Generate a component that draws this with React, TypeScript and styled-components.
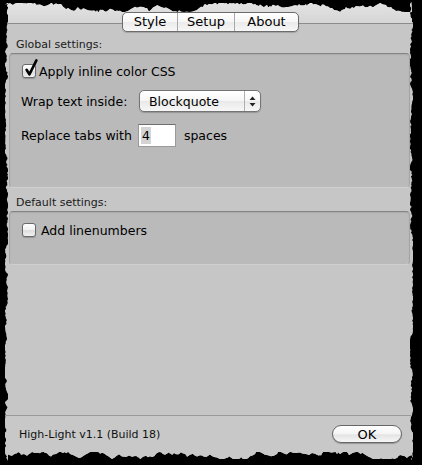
import React from 'react';
import styled, { createGlobalStyle } from 'styled-components';

const GlobalStyle = createGlobalStyle`
  html, body { margin: 0; padding: 0; background: #000; }
  * { box-sizing: border-box; }
  body {
    width: 422px; height: 465px; overflow: hidden;
    font-family: "DejaVu Sans", "Liberation Sans", sans-serif;
    color: #111;
  }
`;

const WIN_W = 408;
const WIN_H = 459;

function makeTorn(w: number, h: number): string {
  let s = 987654;
  const r = () => {
    s = (s * 1103515245 + 12345) & 0x7fffffff;
    return s / 0x7fffffff;
  };
  const walk = (d: number, min: number, max: number, amp: number) => {
    const n = d + (r() - 0.5) * amp;
    return Math.max(min, Math.min(max, n));
  };
  const pts: string[] = [];
  let d = 4;
  for (let x = 0; x < w; x += 1 + Math.floor(r() * 3)) {
    d = walk(d, 1, 10, 4);
    pts.push(`${x}px ${d.toFixed(1)}px`);
  }
  d = 1.5;
  for (let y = 0; y < h; y += 1 + Math.floor(r() * 2)) {
    d = walk(d, 0, 3, 2.5);
    pts.push(`${(w - d).toFixed(1)}px ${y}px`);
  }
  d = 5;
  for (let x = w; x > 0; x -= 1 + Math.floor(r() * 3)) {
    d = walk(d, 2, 9, 4);
    pts.push(`${x}px ${(h - d).toFixed(1)}px`);
  }
  d = 2;
  for (let y = h; y > 0; y -= 1 + Math.floor(r() * 2)) {
    d = walk(d, 0, 3, 2.5);
    pts.push(`${d.toFixed(1)}px ${y}px`);
  }
  return `polygon(${pts.join(',')})`;
}

const TORN = makeTorn(WIN_W, WIN_H);

const Window = styled.div`
  margin: 2px 0 0 5px;
  width: ${WIN_W}px;
  height: ${WIN_H}px;
  display: flex;
  flex-direction: column;
  background: #c6c6c6;
  clip-path: ${TORN};
`;

const Header = styled.div`
  height: 22px;
  flex: none;
  display: flex;
  justify-content: center;
  padding: 10px 0 0 3px;
  background: linear-gradient(#e4e4e4, #d5d5d5);
  border-bottom: 1px solid #8c8c8c;
`;

const Segmented = styled.div`
  position: relative;
  z-index: 2;
  display: flex;
  height: 20px;
  align-self: flex-start;
  border: 1px solid #6c6c6c;
  border-radius: 5px;
  overflow: hidden;
  background: linear-gradient(#ffffff 0%, #f6f6f6 50%, #ebebeb 52%, #f7f7f7 100%);
  box-shadow: 0 1px 1px rgba(0, 0, 0, 0.18);
`;

const Segment = styled.div<{ $w: number; $first?: boolean }>`
  width: ${(p) => p.$w}px;
  display: flex;
  align-items: center;
  justify-content: center;
  font-size: 13px;
  line-height: 18px;
  color: #000;
  border-left: ${(p) => (p.$first ? 'none' : '1px solid #a9a9a9')};
`;

const Main = styled.div`
  flex: 1;
  display: flex;
  flex-direction: column;
  padding: 0 3px 0 4px;
`;

const SectionLabel = styled.div<{ $h: number }>`
  height: ${(p) => p.$h}px;
  display: flex;
  align-items: flex-end;
  padding: 0 0 2px 7px;
  font-size: 11px;
  line-height: 13px;
  color: #1a1a1a;
`;

const Group = styled.div<{ $h: number }>`
  height: ${(p) => p.$h}px;
  display: flex;
  flex-direction: column;
  padding: 9px 0 0 12px;
  background: #bababa;
  border: 1px solid #a4a4a4;
  border-top-color: #858585;
  border-bottom-color: #d0d0d0;
  border-radius: 4px;
  box-shadow: inset 0 1px 1px rgba(0, 0, 0, 0.08);
`;

const Row = styled.div<{ $h: number; $mt?: number }>`
  height: ${(p) => p.$h}px;
  margin-top: ${(p) => p.$mt ?? 0}px;
  display: flex;
  align-items: center;
  font-size: 12.5px;
  color: #000;
`;

const Text = styled.span<{ $w?: number; $ml?: number }>`
  display: inline-block;
  white-space: nowrap;
  ${(p) => (p.$w ? `width: ${p.$w}px;` : '')}
  margin-left: ${(p) => p.$ml ?? 0}px;
`;

const CheckBox = styled.span`
  position: relative;
  flex: none;
  width: 14px;
  height: 14px;
  margin-right: 3px;
  border: 1px solid #6a6a6a;
  border-radius: 3px;
  background: linear-gradient(#ffffff, #f0f0f0 50%, #dddddd 55%, #f2f2f2);
  box-shadow: 0 1px 1px rgba(0, 0, 0, 0.2);
`;

const CheckMark = styled.svg`
  position: absolute;
  left: 1px;
  top: -6px;
  width: 14px;
  height: 18px;
  overflow: visible;
`;

const Popup = styled.div`
  display: flex;
  width: 122px;
  height: 22px;
  border: 1px solid #747474;
  border-radius: 5px;
  overflow: hidden;
  background: linear-gradient(#ffffff 0%, #f6f6f6 50%, #e9e9e9 52%, #f7f7f7 100%);
  box-shadow: 0 1px 1px rgba(0, 0, 0, 0.2);
`;

const PopupLabel = styled.div`
  flex: 1;
  display: flex;
  align-items: center;
  padding-left: 9px;
  font-size: 12.5px;
  color: #000;
`;

const PopupArrows = styled.div`
  width: 16px;
  display: flex;
  align-items: center;
  justify-content: center;
  border-left: 1px solid #b0b0b0;
`;

const TextField = styled.div`
  width: 38px;
  height: 23px;
  margin: 0 8px 0 6px;
  display: flex;
  align-items: center;
  padding-left: 2px;
  background: #fff;
  border: 1px solid #9a9a9a;
  border-top-color: #6e6e6e;
`;

const Selection = styled.span`
  background: #d4d4d4;
  padding: 1px 1px;
  font-size: 12.5px;
  line-height: 15px;
  color: #000;
`;

const Spacer = styled.div`
  flex: 1;
`;

const Footer = styled.div`
  height: 46px;
  flex: none;
  display: flex;
  align-items: flex-start;
  justify-content: space-between;
  padding: 9px 11px 0 14px;
  border-top: 1px solid #9a9a9a;
  background: #c8c8c8;
`;

const FooterText = styled.div`
  height: 18px;
  display: flex;
  align-items: center;
  font-size: 11px;
  color: #111;
`;

const OkButton = styled.div`
  width: 70px;
  height: 18px;
  display: flex;
  align-items: center;
  justify-content: center;
  font-size: 13px;
  color: #000;
  border: 1px solid #666;
  border-radius: 9px;
  background: linear-gradient(#ffffff 0%, #f4f4f4 50%, #e4e4e4 55%, #f6f6f6 100%);
  box-shadow: 0 1px 1px rgba(0, 0, 0, 0.25);
`;

const Check: React.FC<{ checked?: boolean }> = ({ checked }) => (
  <CheckBox>
    {checked && (
      <CheckMark viewBox="0 0 14 18">
        <path
          d="M2.6 10.8 L5.4 15.4 L12.4 1.4"
          fill="none"
          stroke="#000"
          strokeWidth="2.6"
          strokeLinecap="round"
          strokeLinejoin="round"
        />
      </CheckMark>
    )}
  </CheckBox>
);

export default function App() {
  return (
    <>
      <GlobalStyle />
      <Window>
        <Header>
          <Segmented>
            <Segment $w={54} $first>Style</Segment>
            <Segment $w={57}>Setup</Segment>
            <Segment $w={64}>About</Segment>
          </Segmented>
        </Header>
        <Main>
          <SectionLabel $h={29}>Global settings:</SectionLabel>
          <Group $h={135}>
            <Row $h={16}>
              <Check checked />
              <Text>Apply inline color CSS</Text>
            </Row>
            <Row $h={22} $mt={11}>
              <Text $w={118} $ml={-1}>Wrap text inside:</Text>
              <Popup>
                <PopupLabel>Blockquote</PopupLabel>
                <PopupArrows>
                  <svg width="7" height="11" viewBox="0 0 7 11">
                    <path d="M3.5 0.5 L6.5 4 L0.5 4 Z" fill="#222" />
                    <path d="M3.5 10.5 L6.5 7 L0.5 7 Z" fill="#222" />
                  </svg>
                </PopupArrows>
              </Popup>
            </Row>
            <Row $h={23} $mt={12}>
              <Text $ml={-1}>Replace tabs with</Text>
              <TextField>
                <Selection>4</Selection>
              </TextField>
              <Text>spaces</Text>
            </Row>
          </Group>
          <SectionLabel $h={23}>Default settings:</SectionLabel>
          <Group $h={54}>
            <Row $h={16} $mt={1}>
              <Check />
              <Text $ml={2}>Add linenumbers</Text>
            </Row>
          </Group>
          <Spacer />
        </Main>
        <Footer>
          <FooterText>High-Light v1.1 (Build 18)</FooterText>
          <OkButton>OK</OkButton>
        </Footer>
      </Window>
    </>
  );
}
